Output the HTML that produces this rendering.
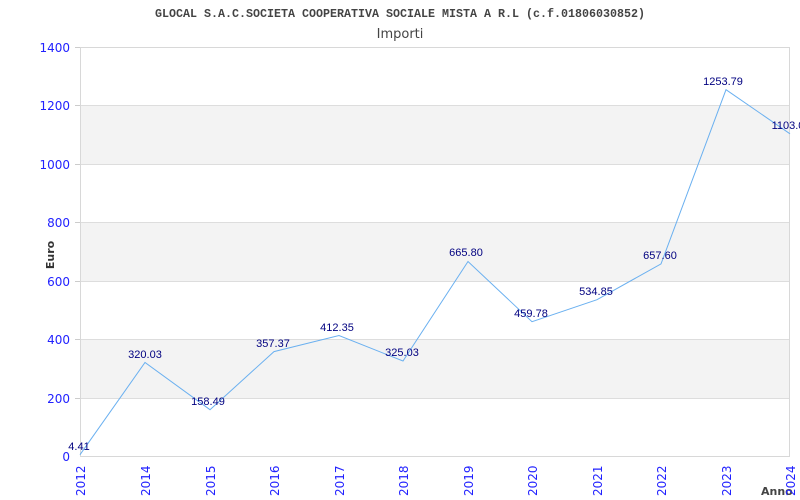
<!DOCTYPE html>
<html><head><meta charset="utf-8"><style>body{margin:0;background:#fff}svg{display:block}</style></head><body>
<svg width="800" height="500" xmlns="http://www.w3.org/2000/svg">
<rect x="80" y="105" width="710" height="59" fill="#f3f3f3"/>
<rect x="80" y="222" width="710" height="59" fill="#f3f3f3"/>
<rect x="80" y="339" width="710" height="59" fill="#f3f3f3"/>
<g stroke="#ddd" stroke-width="1">
<line x1="80" y1="105.5" x2="790" y2="105.5"/><line x1="80" y1="164.5" x2="790" y2="164.5"/>
<line x1="80" y1="222.5" x2="790" y2="222.5"/><line x1="80" y1="281.5" x2="790" y2="281.5"/>
<line x1="80" y1="339.5" x2="790" y2="339.5"/><line x1="80" y1="398.5" x2="790" y2="398.5"/>
</g>
<rect x="80.5" y="47.5" width="709" height="409" fill="none" stroke="#d8d8d8"/>
<g stroke="#ccc"><line x1="75" y1="47.5" x2="80" y2="47.5"/><line x1="75" y1="105.5" x2="80" y2="105.5"/><line x1="75" y1="164.5" x2="80" y2="164.5"/><line x1="75" y1="222.5" x2="80" y2="222.5"/><line x1="75" y1="281.5" x2="80" y2="281.5"/><line x1="75" y1="339.5" x2="80" y2="339.5"/><line x1="75" y1="398.5" x2="80" y2="398.5"/></g>
<text x="155" y="17" textLength="490" lengthAdjust="spacingAndGlyphs" font-family="Liberation Mono,monospace" font-weight="bold" font-size="11.5" fill="#444">GLOCAL S.A.C.SOCIETA COOPERATIVA SOCIALE MISTA A R.L (c.f.01806030852)</text>
<text x="400" y="38" text-anchor="middle" font-family="DejaVu Sans,sans-serif" font-size="13" fill="#444">Importi</text>
<g font-family="DejaVu Sans,sans-serif" font-size="12" fill="#22f" text-anchor="end">
<text x="70" y="52">1400</text><text x="70" y="110">1200</text><text x="70" y="169">1000</text><text x="70" y="227">800</text><text x="70" y="286">600</text><text x="70" y="344">400</text><text x="70" y="403">200</text><text x="70" y="461">0</text>
</g>
<text transform="translate(54,255) rotate(-90)" text-anchor="middle" font-family="DejaVu Sans,sans-serif" font-weight="bold" font-size="11" fill="#333">Euro</text>
<text x="761" y="495" font-family="DejaVu Sans,sans-serif" font-weight="bold" font-size="11" fill="#444">Anno</text>
<g font-family="DejaVu Sans,sans-serif" font-size="12" fill="#22f">
<text transform="translate(85,496) rotate(-90)">2012</text>
<text transform="translate(150,496) rotate(-90)">2014</text>
<text transform="translate(215,496) rotate(-90)">2015</text>
<text transform="translate(279,496) rotate(-90)">2016</text>
<text transform="translate(344,496) rotate(-90)">2017</text>
<text transform="translate(408,496) rotate(-90)">2018</text>
<text transform="translate(473,496) rotate(-90)">2019</text>
<text transform="translate(537,496) rotate(-90)">2020</text>
<text transform="translate(602,496) rotate(-90)">2021</text>
<text transform="translate(666,496) rotate(-90)">2022</text>
<text transform="translate(731,496) rotate(-90)">2023</text>
<text transform="translate(795,496) rotate(-90)">2024</text>
</g>
<polyline fill="none" stroke="#6ab0f0" stroke-width="1" points="80,454.7 145,362.5 210,409.7 274,351.6 339,335.5 403,361 468,261.5 532,321.7 597,299.7 661,263.9 726,89.7 790,133.8"/>
<g font-family="Liberation Sans,Arial,sans-serif" font-size="11" fill="#000080" text-anchor="middle">
<text x="79" y="450">4.41</text>
<text x="145" y="358">320.03</text>
<text x="208" y="405">158.49</text>
<text x="273" y="347">357.37</text>
<text x="337" y="331">412.35</text>
<text x="402" y="356">325.03</text>
<text x="466" y="256">665.80</text>
<text x="531" y="317">459.78</text>
<text x="596" y="295">534.85</text>
<text x="660" y="259">657.60</text>
<text x="723" y="85">1253.79</text>
<text x="788" y="129">1103.0</text>
</g>
</svg>
</body></html>
